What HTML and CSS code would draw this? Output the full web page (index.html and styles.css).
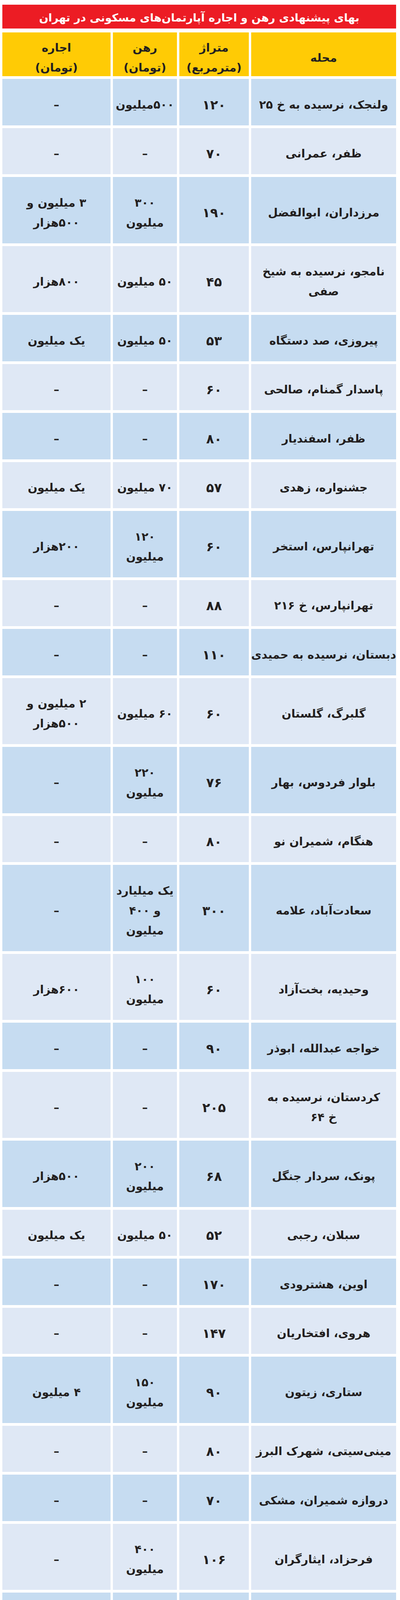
FILE: index.html
```html
<!DOCTYPE html>
<html lang="fa">
<head>
<meta charset="utf-8">
<title>بهای پیشنهادی رهن و اجاره</title>
<link rel="stylesheet" href="styles.css">
</head>
<body>
<div class="sheet" dir="rtl">
  <div class="title"><span class="ln">بهای پیشنهادی رهن و اجاره آپارتمان‌های مسکونی در تهران</span></div>
  <div class="row head">
    <div class="cell"><span class="ln">محله</span></div>
    <div class="cell"><span class="ln">متراژ</span><span class="ln">(مترمربع)</span></div>
    <div class="cell"><span class="ln">رهن</span><span class="ln">(تومان)</span></div>
    <div class="cell"><span class="ln">اجاره</span><span class="ln">(تومان)</span></div>
  </div>
  <div class="row data"><div class="cell"><span class="ln">ولنجک، نرسیده به خ ۲۵</span></div><div class="cell"><span class="ln">۱۲۰</span></div><div class="cell"><span class="ln">۵۰۰میلیون</span></div><div class="cell"><span class="ln">–</span></div></div>
  <div class="row data"><div class="cell"><span class="ln">ظفر، عمرانی</span></div><div class="cell"><span class="ln">۷۰</span></div><div class="cell"><span class="ln">–</span></div><div class="cell"><span class="ln">–</span></div></div>
  <div class="row data"><div class="cell"><span class="ln">مرزداران، ابوالفضل</span></div><div class="cell"><span class="ln">۱۹۰</span></div><div class="cell"><span class="ln">۳۰۰</span><span class="ln">میلیون</span></div><div class="cell"><span class="ln">۳ میلیون و</span><span class="ln">۵۰۰هزار</span></div></div>
  <div class="row data"><div class="cell"><span class="ln">نامجو، نرسیده به شیخ</span><span class="ln">صفی</span></div><div class="cell"><span class="ln">۴۵</span></div><div class="cell"><span class="ln">۵۰ میلیون</span></div><div class="cell"><span class="ln">۸۰۰هزار</span></div></div>
  <div class="row data"><div class="cell"><span class="ln">پیروزی، صد دستگاه</span></div><div class="cell"><span class="ln">۵۳</span></div><div class="cell"><span class="ln">۵۰ میلیون</span></div><div class="cell"><span class="ln">یک میلیون</span></div></div>
  <div class="row data"><div class="cell"><span class="ln">پاسدار گمنام، صالحی</span></div><div class="cell"><span class="ln">۶۰</span></div><div class="cell"><span class="ln">–</span></div><div class="cell"><span class="ln">–</span></div></div>
  <div class="row data"><div class="cell"><span class="ln">ظفر، اسفندیار</span></div><div class="cell"><span class="ln">۸۰</span></div><div class="cell"><span class="ln">–</span></div><div class="cell"><span class="ln">–</span></div></div>
  <div class="row data"><div class="cell"><span class="ln">جشنواره، زهدی</span></div><div class="cell"><span class="ln">۵۷</span></div><div class="cell"><span class="ln">۷۰ میلیون</span></div><div class="cell"><span class="ln">یک میلیون</span></div></div>
  <div class="row data"><div class="cell"><span class="ln">تهرانپارس، استخر</span></div><div class="cell"><span class="ln">۶۰</span></div><div class="cell"><span class="ln">۱۲۰</span><span class="ln">میلیون</span></div><div class="cell"><span class="ln">۲۰۰هزار</span></div></div>
  <div class="row data"><div class="cell"><span class="ln">تهرانپارس، خ ۲۱۶</span></div><div class="cell"><span class="ln">۸۸</span></div><div class="cell"><span class="ln">–</span></div><div class="cell"><span class="ln">–</span></div></div>
  <div class="row data"><div class="cell"><span class="ln">دبستان، نرسیده به حمیدی</span></div><div class="cell"><span class="ln">۱۱۰</span></div><div class="cell"><span class="ln">–</span></div><div class="cell"><span class="ln">–</span></div></div>
  <div class="row data"><div class="cell"><span class="ln">گلبرگ، گلستان</span></div><div class="cell"><span class="ln">۶۰</span></div><div class="cell"><span class="ln">۶۰ میلیون</span></div><div class="cell"><span class="ln">۲ میلیون و</span><span class="ln">۵۰۰هزار</span></div></div>
  <div class="row data"><div class="cell"><span class="ln">بلوار فردوس، بهار</span></div><div class="cell"><span class="ln">۷۶</span></div><div class="cell"><span class="ln">۲۲۰</span><span class="ln">میلیون</span></div><div class="cell"><span class="ln">–</span></div></div>
  <div class="row data"><div class="cell"><span class="ln">هنگام، شمیران نو</span></div><div class="cell"><span class="ln">۸۰</span></div><div class="cell"><span class="ln">–</span></div><div class="cell"><span class="ln">–</span></div></div>
  <div class="row data"><div class="cell"><span class="ln">سعادت‌آباد، علامه</span></div><div class="cell"><span class="ln">۳۰۰</span></div><div class="cell"><span class="ln">یک میلیارد</span><span class="ln">و ۴۰۰</span><span class="ln">میلیون</span></div><div class="cell"><span class="ln">–</span></div></div>
  <div class="row data"><div class="cell"><span class="ln">وحیدیه، بخت‌آزاد</span></div><div class="cell"><span class="ln">۶۰</span></div><div class="cell"><span class="ln">۱۰۰</span><span class="ln">میلیون</span></div><div class="cell"><span class="ln">۶۰۰هزار</span></div></div>
  <div class="row data"><div class="cell"><span class="ln">خواجه عبدالله، ابوذر</span></div><div class="cell"><span class="ln">۹۰</span></div><div class="cell"><span class="ln">–</span></div><div class="cell"><span class="ln">–</span></div></div>
  <div class="row data"><div class="cell"><span class="ln">کردستان، نرسیده به</span><span class="ln">خ ۶۴</span></div><div class="cell"><span class="ln">۲۰۵</span></div><div class="cell"><span class="ln">–</span></div><div class="cell"><span class="ln">–</span></div></div>
  <div class="row data"><div class="cell"><span class="ln">پونک، سردار جنگل</span></div><div class="cell"><span class="ln">۶۸</span></div><div class="cell"><span class="ln">۲۰۰</span><span class="ln">میلیون</span></div><div class="cell"><span class="ln">۵۰۰هزار</span></div></div>
  <div class="row data"><div class="cell"><span class="ln">سبلان، رجبی</span></div><div class="cell"><span class="ln">۵۲</span></div><div class="cell"><span class="ln">۵۰ میلیون</span></div><div class="cell"><span class="ln">یک میلیون</span></div></div>
  <div class="row data"><div class="cell"><span class="ln">اوین، هشترودی</span></div><div class="cell"><span class="ln">۱۷۰</span></div><div class="cell"><span class="ln">–</span></div><div class="cell"><span class="ln">–</span></div></div>
  <div class="row data"><div class="cell"><span class="ln">هروی، افتخاریان</span></div><div class="cell"><span class="ln">۱۴۷</span></div><div class="cell"><span class="ln">–</span></div><div class="cell"><span class="ln">–</span></div></div>
  <div class="row data"><div class="cell"><span class="ln">ستاری، زیتون</span></div><div class="cell"><span class="ln">۹۰</span></div><div class="cell"><span class="ln">۱۵۰</span><span class="ln">میلیون</span></div><div class="cell"><span class="ln">۴ میلیون</span></div></div>
  <div class="row data"><div class="cell"><span class="ln">مینی‌سیتی، شهرک البرز</span></div><div class="cell"><span class="ln">۸۰</span></div><div class="cell"><span class="ln">–</span></div><div class="cell"><span class="ln">–</span></div></div>
  <div class="row data"><div class="cell"><span class="ln">دروازه شمیران، مشکی</span></div><div class="cell"><span class="ln">۷۰</span></div><div class="cell"><span class="ln">–</span></div><div class="cell"><span class="ln">–</span></div></div>
  <div class="row data"><div class="cell"><span class="ln">فرحزاد، ایثارگران</span></div><div class="cell"><span class="ln">۱۰۶</span></div><div class="cell"><span class="ln">۴۰۰</span><span class="ln">میلیون</span></div><div class="cell"><span class="ln">–</span></div></div>
  <div class="row data"><div class="cell"><span class="ln">دولت، کاوه</span></div><div class="cell"><span class="ln">۲۰۰</span></div><div class="cell"><span class="ln">۵۰۰</span><span class="ln">میلیون</span></div><div class="cell"><span class="ln">۷ میلیون</span></div></div>
  <div class="row data"><div class="cell"><span class="ln">دبستان، کابلی</span></div><div class="cell"><span class="ln">۱۱۶</span></div><div class="cell"><span class="ln">–</span></div><div class="cell"><span class="ln">–</span></div></div>
  <div class="row data"><div class="cell"><span class="ln">شهرک غرب، فلامک</span></div><div class="cell"><span class="ln">۱۱۰</span></div><div class="cell"><span class="ln">–</span></div><div class="cell"><span class="ln">–</span></div></div>
</div>
</body>
</html>
```

FILE: styles.css
```css
html, body {
  margin: 0;
  padding: 0;
  background: #ffffff;
}

.sheet {
  width: 1008px;
  margin: 12px auto 0 6px;
  display: flex;
  flex-direction: column;
  gap: 7px;
  font-family: "DejaVu Sans", sans-serif;
  font-weight: bold;
  color: #231f20;
  direction: rtl;
}

.ln {
  display: block;
  height: 51px;
  line-height: 51px;
  white-space: nowrap;
}

.title {
  height: 61px;
  box-sizing: border-box;
  padding-top: 6px;
  margin-bottom: 3px;
  background: #ec1c24;
  color: #ffffff;
  font-size: 28px;
  display: flex;
  align-items: center;
  justify-content: center;
}

.row {
  display: grid;
  grid-template-columns: 371px 178px 164px 277px;
  column-gap: 6px;
}

.cell {
  display: flex;
  flex-direction: column;
  align-items: center;
  justify-content: center;
  text-align: center;
  font-size: 29px;
}

.head .cell {
  background: #ffcb05;
  height: 112px;
  box-sizing: border-box;
  padding: 18px 4px 0;
}

.data .cell {
  padding: 40.75px 4px 26.75px;
  background: #dfe8f5;
}

.data .cell:nth-child(2) {
  font-size: 33px;
}

.data:nth-child(odd) .cell {
  background: #c6dcf1;
}
```
